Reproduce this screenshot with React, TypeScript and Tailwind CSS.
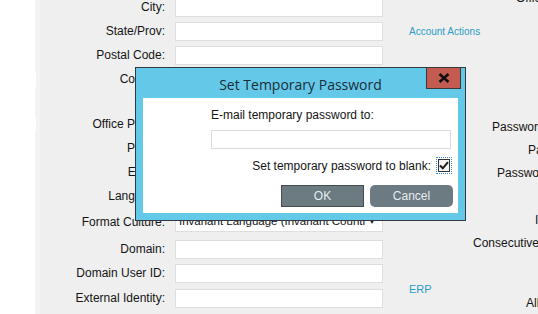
import React from "react";

type Row = { label: string; h?: number; mt?: number; kind?: "input" | "select" | "none" };

const leftRows: Row[] = [
  { label: "City:" },
  { label: "State/Prov:" },
  { label: "Postal Code:" },
  { label: "Country:", kind: "none" },
  { label: "", h: 21, kind: "none" },
  { label: "Office Phone:", kind: "none" },
  { label: "Phone:", kind: "none" },
  { label: "E-mail:", kind: "none" },
  { label: "Language:", kind: "none" },
  { label: "Format Culture:", kind: "select", mt: 2 },
  { label: "Domain:", mt: 3 },
  { label: "Domain User ID:" },
  { label: "External Identity:", mt: 1 },
];

function FieldRow({ row, mark }: { row: Row; mark?: boolean }) {
  const kind = row.kind ?? "input";
  return (
    <div
      className="flex items-center gap-[10px]"
      style={{ height: row.h ?? 24, marginTop: row.mt ?? 0 }}
    >
      <div className="w-[130px] flex items-center h-full">
        <div className="w-[27px] h-full flex items-center">
          {mark && <div className="w-px h-[16px] bg-white" />}
        </div>
        <span className="flex-1 text-right whitespace-nowrap">{row.label}</span>
      </div>
      {kind === "input" && (
        <div className="w-[208px] h-[19px] bg-white border border-[#dedede]" />
      )}
      {kind === "select" && (
        <div className="w-[208px] h-[19px] bg-white border border-[#dedede] flex items-center pl-[3px] overflow-hidden">
          <span className="flex-1 whitespace-nowrap overflow-hidden text-[11.5px]">
            Invariant Language (Invariant Country)
          </span>
          <span className="w-[16px] shrink-0 text-[8px] leading-none pl-[2px]">▼</span>
        </div>
      )}
    </div>
  );
}

function RightLabel({ text, pl, mt = 0 }: { text: string; pl: number; mt?: number }) {
  return (
    <div className="h-[24px] flex items-center whitespace-nowrap" style={{ marginTop: mt, paddingLeft: pl }}>
      {text}
    </div>
  );
}

export default function App() {
  return (
    <div
      className="relative w-[538px] h-[314px] overflow-hidden flex bg-white text-[12px] text-[#141414]"
      style={{ fontFamily: '"Liberation Sans", Arial, sans-serif' }}
    >
      <div className="w-[35px] shrink-0 bg-white" />
      <div className="flex-1 flex bg-[#efefef] border-l-[5px] border-[#f3f3f3]">
        {/* left form */}
        <div className="flex flex-col mt-[-5px] ml-[-5px]">
          {leftRows.map((r, i) => (
            <FieldRow key={i} row={r} mark={i === 3 || i === 5} />
          ))}
        </div>

        {/* link column */}
        <div className="w-[57px] ml-[26px] flex flex-col text-[#2b9cc4]">
          <div className="h-[24px] mt-[19px] flex items-center text-[10px] whitespace-nowrap">
            Account Actions
          </div>
          <div className="h-[24px] mt-[234px] flex items-center text-[11px]">ERP</div>
        </div>

        {/* right labels */}
        <div className="flex-1 overflow-hidden flex flex-col">
          <RightLabel text="Office Location:" pl={50} mt={-14} />
          <RightLabel text="Password Expires:" pl={26} mt={106} />
          <RightLabel text="Password:" pl={62} />
          <RightLabel text="Password Hint:" pl={31} />
          <RightLabel text="Inactive:" pl={69} mt={24} />
          <RightLabel text="Consecutive Failures:" pl={7} />
          <RightLabel text="Allow Login:" pl={60} mt={37} />
        </div>
      </div>

      {/* dialog */}
      <div className="absolute left-[135px] top-[67px] w-[331px] h-[154px] border border-[#2e3a40] bg-[#64c9e9] flex flex-col">
        <div className="h-[30px] shrink-0 flex items-center justify-center relative">
          <span
            className="text-[14px] text-[#1d2d38] mt-[2px]"
            style={{ fontFamily: '"Open Sans", "Noto Sans", sans-serif' }}
          >
            Set Temporary Password
          </span>
          <div className="absolute right-[4px] top-[-1px] w-[35px] h-[22px] bg-[#c45b50] border border-[#3a3a3a] flex items-center justify-center">
            <svg width="12" height="10" viewBox="0 0 12 10">
              <path d="M1.5 1 L10.5 9 M10.5 1 L1.5 9" stroke="#111" strokeWidth="2.6" />
            </svg>
          </div>
        </div>
        <div className="flex-1 mx-[7px] mb-[7px] bg-white pl-[68px] pt-[10px]">
          <div className="w-[242px] flex flex-col">
            <div className="h-[14px] leading-[14px]">E-mail temporary password to:</div>
            <div className="mt-[8px] w-[240px] h-[19px] border border-[#dcdcdc] bg-white" />
            <div className="mt-[8px] h-[17px] flex items-center justify-end gap-[5px] pr-[1px]">
              <span>Set temporary password to blank:</span>
              <div className="w-[16px] h-[17px] border border-dotted border-[#3d7fd0] flex items-center justify-center">
                <div className="w-[12px] h-[13px] border border-[#333] bg-[#f4f4f4] flex items-center justify-center">
                  <svg width="10" height="9" viewBox="0 0 10 9">
                    <path d="M1 4.5 L3.8 7.3 L9 1.2" fill="none" stroke="#1a1a1a" strokeWidth="2" />
                  </svg>
                </div>
              </div>
            </div>
            <div className="mt-[11px] flex justify-end gap-[6px] text-[12px] text-[#e6ecef]">
              <div className="w-[83px] h-[22px] bg-[#6c7a82] border border-[#454c50] flex items-center justify-center">
                OK
              </div>
              <div className="w-[83px] h-[22px] bg-[#6c7a82] rounded-[5px] flex items-center justify-center">
                Cancel
              </div>
            </div>
          </div>
        </div>
      </div>
    </div>
  );
}
